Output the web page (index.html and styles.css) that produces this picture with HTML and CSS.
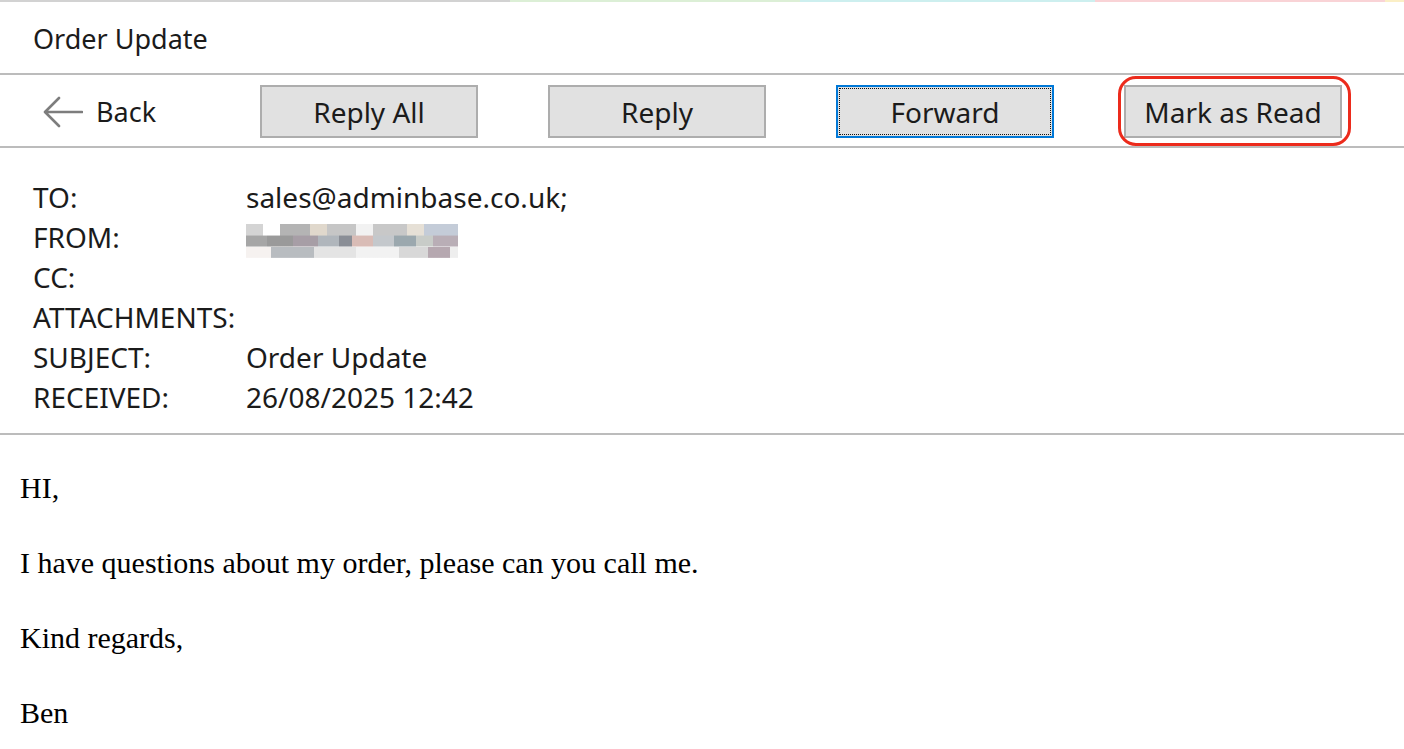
FILE: index.html
```html
<!DOCTYPE html>
<html lang="en">
<head>
  <meta charset="UTF-8" />
  <meta name="viewport" content="width=device-width, initial-scale=1" />
  <title>Order Update</title>
  <link rel="stylesheet" href="styles.css">
</head>
<body>

<div class="strip"></div>

<header class="title">
  Order Update
</header>

<nav class="toolbar">
  <a class="back" href="#">
    <svg width="40" height="32" viewBox="0 0 40 32">
      <path d="M39 16 H3 M16 2 L2 16 L16 30" fill="none" stroke="#7d7d7d" stroke-width="2.6" stroke-linecap="round" stroke-linejoin="round"/>
    </svg>
    <span>Back</span>
  </a>
  <button type="button">Reply All</button>
  <button type="button">Reply</button>
  <button type="button" class="focused">Forward</button>
  <button type="button" class="marked">Mark as Read</button>
</nav>

<section class="headers">
  <div class="row"><span class="label">TO:</span><span class="value">sales@adminbase.co.uk;</span></div>
  <div class="row"><span class="label">FROM:</span><span class="value"><span class="blur"></span></span></div>
  <div class="row"><span class="label">CC:</span><span class="value"></span></div>
  <div class="row"><span class="label">ATTACHMENTS:</span><span class="value"></span></div>
  <div class="row"><span class="label">SUBJECT:</span><span class="value">Order Update</span></div>
  <div class="row"><span class="label">RECEIVED:</span><span class="value">26/08/2025 12:42</span></div>
</section>

<main class="message">
  <p>HI,</p>
  <p>I have questions about my order, please can you call me.</p>
  <p>Kind regards,</p>
  <p>Ben</p>
</main>

</body>
</html>
```

FILE: styles.css
```css
/* Reset */
* {
  box-sizing: border-box;
}
body {
  margin: 0;
  background: #fff;
  color: #1b1b1b;
  font-family: "Segoe UI", "Noto Sans", sans-serif;
  font-size: 27px;
}
.strip {
  height: 2px;
  background: linear-gradient(to right,
    #d2d2d2 0, #d2d2d2 510px,
    #dcefd6 510px, #dcefd6 800px,
    #cdefef 800px, #cdefef 1095px,
    #f9d3d6 1095px, #f9d3d6 1385px,
    #fbefc6 1385px);
}
.title {
  height: 73px;
  padding: 19px 33px 0;
  line-height: 36px;
  border-bottom: 2px solid #bcbcbc;
}
.toolbar {
  display: flex;
  align-items: center;
  gap: 70px;
  height: 73px;
  padding: 10px 0 8px;
  border-bottom: 2px solid #bcbcbc;
}
.back {
  display: flex;
  align-items: center;
  gap: 13px;
  width: 147px;
  margin-left: 43px;
  color: #1b1b1b;
  text-decoration: none;
}
.back svg {
  display: block;
}
button {
  position: relative;
  width: 218px;
  height: 53px;
  padding: 0;
  background: #e1e1e1;
  border: 2px solid #adadad;
  font-family: inherit;
  font-size: 28px;
  color: #1b1b1b;
  cursor: pointer;
}
button.focused {
  border-color: #0078d7;
  outline: 1px dotted #111;
  outline-offset: -4px;
}
button.marked::after {
  content: "";
  position: absolute;
  top: -11px;
  bottom: -10px;
  left: -8px;
  right: -11px;
  border: 3px solid #ec2b1c;
  border-radius: 18px;
}
.headers {
  padding: 29px 0 16px;
  border-bottom: 2px solid #bcbcbc;
  font-size: 28px;
}
.row {
  display: flex;
  line-height: 40px;
  height: 40px;
}
.label {
  width: 246px;
  padding-left: 33px;
}
.blur {
  display: inline-block;
  width: 212px;
  height: 34px;
  vertical-align: middle;
  background:
    linear-gradient(to right, #d4d4d4 0 8%, #fff 8% 16%, #b4b4b4 16% 30%, #e0d8cc 30% 38%, #c6c6c6 38% 52%, #f2f2f2 52% 60%, #c8c8c8 60% 76%, #e6e0d6 76% 84%, #c4ccd8 84% 100%) top / 100% 34% no-repeat,
    linear-gradient(to right, #a6a6a6 0 10%, #9a9a9a 10% 22%, #a79ea6 22% 34%, #b0b6bc 34% 44%, #8a8e96 44% 50%, #d9bcb6 50% 60%, #c4c8cc 60% 70%, #9ba8ae 70% 80%, #c8ccc8 80% 88%, #b9aeb6 88% 100%) center / 100% 34% no-repeat,
    linear-gradient(to right, #f6f2f0 0 12%, #b8bcc0 12% 32%, #e4e4e4 32% 52%, #f2f2f2 52% 72%, #d8d8d8 72% 86%, #b6a8b0 86% 96%, #eee 96% 100%) bottom / 100% 32% no-repeat;
}
.message {
  padding: 35px 20px 0;
  font-family: "Liberation Serif", "Times New Roman", serif;
  font-size: 30px;
  color: #000;
}
.message p {
  margin: 0 0 39px;
  line-height: 36px;
}
```
